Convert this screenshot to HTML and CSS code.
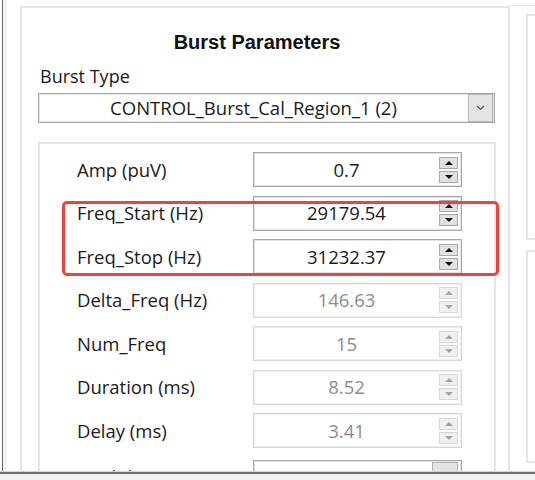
FILE: index.html
```html
<!DOCTYPE html>
<html>
<head>
<meta charset="utf-8">
<link rel="stylesheet" href="styles.css">
</head>
<body>
<div class="screen">
  <div class="main">
    <div class="edge"></div>
    <div class="group">
      <div class="group-title">Burst Parameters</div>
      <div class="field-label">Burst Type</div>
      <div class="combo">
        <div class="combo-text">CONTROL_Burst_Cal_Region_1 (2)</div>
        <div class="combo-btn">
          <svg width="9" height="6" viewBox="0 0 9 6"><path d="M1 1 L4.5 4.5 L8 1" fill="none" stroke="#555" stroke-width="1.2"/></svg>
        </div>
      </div>
      <div class="panel">
        <div class="row">
          <div class="label">Amp (puV)</div>
          <div class="box">
            <div class="value">0.7</div>
            <div class="spin"><div class="sb up"></div><div class="sb down"></div></div>
          </div>
        </div>
        <div class="row">
          <div class="label">Freq_Start (Hz)</div>
          <div class="box">
            <div class="value">29179.54</div>
            <div class="spin"><div class="sb up"></div><div class="sb down"></div></div>
          </div>
        </div>
        <div class="row">
          <div class="label">Freq_Stop (Hz)</div>
          <div class="box">
            <div class="value">31232.37</div>
            <div class="spin"><div class="sb up"></div><div class="sb down"></div></div>
          </div>
        </div>
        <div class="row">
          <div class="label">Delta_Freq (Hz)</div>
          <div class="box disabled">
            <div class="value">146.63</div>
            <div class="spin"><div class="sb up"></div><div class="sb down"></div></div>
          </div>
        </div>
        <div class="row">
          <div class="label">Num_Freq</div>
          <div class="box disabled">
            <div class="value">15</div>
            <div class="spin"><div class="sb up"></div><div class="sb down"></div></div>
          </div>
        </div>
        <div class="row">
          <div class="label">Duration (ms)</div>
          <div class="box disabled">
            <div class="value">8.52</div>
            <div class="spin"><div class="sb up"></div><div class="sb down"></div></div>
          </div>
        </div>
        <div class="row">
          <div class="label">Delay (ms)</div>
          <div class="box disabled">
            <div class="value">3.41</div>
            <div class="spin"><div class="sb up"></div><div class="sb down"></div></div>
          </div>
        </div>
        <div class="row last">
          <div class="label">Modulation</div>
          <div class="box dropbox">
            <div class="value"></div>
            <div class="dropbtn"></div>
          </div>
        </div>
      </div>
    </div>
    <div class="side">
      <div class="side-box first"></div>
      <div class="side-box second"></div>
    </div>
  </div>
  <div class="statusbar"></div>
  <div class="highlight"></div>
</div>
</body>
</html>
```

FILE: styles.css
```css
html, body {
  margin: 0;
  padding: 0;
}
body {
  width: 535px;
  height: 480px;
  overflow: hidden;
  background: #ffffff;
  font-family: "Open Sans", "Noto Sans", sans-serif;
  color: #1a1a1a;
}
.screen {
  position: relative;
  width: 535px;
  height: 480px;
  display: flex;
  flex-direction: column;
}
.main {
  flex: none;
  height: 471px;
  display: flex;
  overflow: hidden;
}
.edge {
  flex: none;
  margin-left: 2px;
  width: 4px;
  border-left: 1px solid #6b6b6b;
  background: #f3f3f3;
}
.group {
  flex: none;
  margin-left: 13px;
  margin-top: 6px;
  width: 458px;
  padding: 0 12px 0 16px;
  border: 2px solid #e6e6e6;
  border-bottom: none;
}
.group-title {
  font-family: "Liberation Sans", Arial, sans-serif;
  font-weight: bold;
  font-size: 20px;
  line-height: 22px;
  text-align: center;
  padding-top: 23px;
  padding-right: 20px;
  color: #111;
}
.field-label {
  margin-top: 11px;
  padding-left: 2px;
  font-size: 18px;
  line-height: 24px;
}
.combo {
  margin-top: 5px;
  margin-right: 1px;
  height: 28px;
  border: 1px solid #a8a8a8;
  box-shadow: inset 0 0 0 1px #e4e4e4;
  display: flex;
}
.combo-text {
  flex: 1;
  text-align: center;
  font-size: 18.5px;
  line-height: 28px;
}
.combo-btn {
  width: 23px;
  margin-right: 1px;
  border: 1px solid #b4b4b4;
  background: #e5e5e5;
  display: flex;
  align-items: center;
  justify-content: center;
}
.panel {
  margin-top: 19px;
  border: 2px solid #e6e6e6;
  border-bottom: none;
  padding: 8px 32px 0 37px;
  display: flex;
  flex-direction: column;
  gap: 8.5px;
}
.row {
  display: flex;
  align-items: center;
  height: 35px;
}
.row.last {
  margin-top: 3px;
}
.label {
  flex: 1;
  font-size: 18.5px;
  line-height: 24px;
}
.box {
  width: 207px;
  height: 33px;
  border: 1px solid #a9a9a9;
  box-shadow: inset 0 0 0 1px #e2e2e2;
  display: flex;
  align-items: center;
}
.value {
  flex: 1;
  text-align: center;
  font-size: 18.5px;
  line-height: 24px;
  color: #1a1a1a;
}
.spin {
  width: 19px;
  margin-right: 3px;
  display: flex;
  flex-direction: column;
  gap: 2px;
}
.sb {
  height: 10px;
  border: 1px solid #a9a9a9;
  background: #e1e1e1;
  position: relative;
}
.sb::after {
  content: "";
  position: absolute;
  left: 5px;
  top: 3px;
  border-left: 4px solid transparent;
  border-right: 4px solid transparent;
}
.sb.up::after {
  border-bottom: 4px solid #111;
}
.sb.down::after {
  border-top: 4px solid #111;
}
.box.disabled {
  border-color: #d8d8d8;
  box-shadow: inset 0 0 0 1px #eeeeee;
}
.box.disabled .value {
  color: #8c8c8c;
}
.box.disabled .sb {
  border-color: #d6d6d6;
  background: #f0f0f0;
}
.box.disabled .sb.up::after {
  border-bottom-color: #a3a3a3;
}
.box.disabled .sb.down::after {
  border-top-color: #a3a3a3;
}
.box.dropbox {
  align-items: flex-start;
}
.dropbtn {
  width: 24px;
  height: 28px;
  margin: 1px 3px 0 0;
  border: 1px solid #b4b4b4;
  background: #e3e3e3;
}
.side {
  flex: 1;
  margin-top: 5px;
  border-top: 1px solid #e8e8e8;
  padding: 8px 0 0 16px;
  display: flex;
  flex-direction: column;
  gap: 10px;
}
.side-box {
  border: 2px solid #e6e6e6;
  border-right: none;
}
.side-box.first {
  height: 222px;
}
.side-box.second {
  height: 209px;
}
.statusbar {
  flex: none;
  height: 8px;
  border-top: 1px solid #d4d4d4;
  background: linear-gradient(#6e6e6e 0 2px, #f0f0f0 2px);
}
.highlight {
  position: absolute;
  left: 62px;
  top: 201px;
  width: 437px;
  height: 75px;
  box-sizing: border-box;
  border: 3px solid #ee433b;
  border-radius: 5px;
}
```
